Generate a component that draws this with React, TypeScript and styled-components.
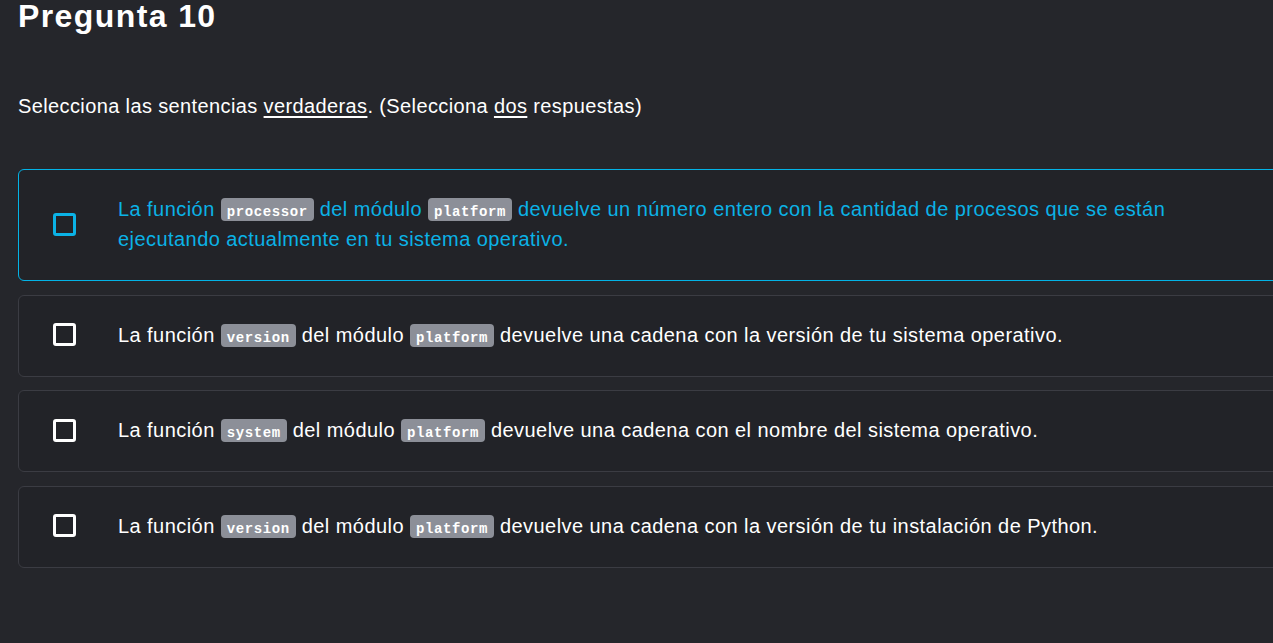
import React from "react";
import styled, { createGlobalStyle } from "styled-components";

const GlobalStyle = createGlobalStyle`
  html, body {
    margin: 0;
    padding: 0;
    background: #25262b;
    overflow: hidden;
  }
  body {
    font-family: "Liberation Sans", Arial, sans-serif;
    color: #ffffff;
  }
`;

const Page = styled.div`
  padding: 0 0 0 18px;
  width: 1300px;
  min-height: 643px;
  box-sizing: border-box;
`;

const Title = styled.h1`
  margin: 0;
  font-size: 32px;
  line-height: 32px;
  font-weight: 700;
  letter-spacing: 1.4px;
  color: #ffffff;
`;

const Prompt = styled.p`
  margin: 62px 0 0 0;
  font-size: 20px;
  line-height: 24px;
  letter-spacing: 0.38px;
`;

const U = styled.span`
  text-decoration: underline;
  text-underline-offset: 3px;
`;

const Options = styled.div`
  display: flex;
  flex-direction: column;
  gap: 13.5px;
  margin-top: 51px;
`;

const Card = styled.div<{ $selected?: boolean }>`
  display: flex;
  align-items: center;
  gap: 42px;
  padding: 24px 34px 26px 34px;
  border: 1px solid ${(p) => (p.$selected ? "#03b3e6" : "#3b3c43")};
  border-radius: 6px;
  background: #222328;
  color: ${(p) => (p.$selected ? "#0bb2e6" : "#ffffff")};
`;

const Box = styled.span<{ $selected?: boolean }>`
  flex: 0 0 auto;
  width: 23px;
  height: 23px;
  box-sizing: border-box;
  border: 3px solid ${(p) => (p.$selected ? "#0bb2e6" : "#ffffff")};
  border-radius: 3px;
`;

const Text = styled.div`
  font-size: 20px;
  line-height: 30px;
  letter-spacing: 0.44px;
  max-width: 1090px;
`;

const Code = styled.code`
  display: inline-block;
  height: 23px;
  box-sizing: border-box;
  padding: 4px 6px 0 6px;
  border-radius: 4px;
  background: #8c8f98;
  color: #ffffff;
  font-family: "Liberation Mono", "DejaVu Sans Mono", monospace;
  font-weight: 700;
  font-size: 14px;
  line-height: 20px;
  letter-spacing: 0.6px;
  vertical-align: baseline;
`;

type Opt = { fn: string; rest: string; selected?: boolean };

const options: Opt[] = [
  {
    fn: "processor",
    rest:
      "devuelve un número entero con la cantidad de procesos que se están ejecutando actualmente en tu sistema operativo.",
    selected: true,
  },
  {
    fn: "version",
    rest: "devuelve una cadena con la versión de tu sistema operativo.",
  },
  {
    fn: "system",
    rest: "devuelve una cadena con el nombre del sistema operativo.",
  },
  {
    fn: "version",
    rest: "devuelve una cadena con la versión de tu instalación de Python.",
  },
];

export default function App() {
  return (
    <>
      <GlobalStyle />
      <Page>
        <Title>Pregunta 10</Title>
        <Prompt>
          Selecciona las sentencias <U>verdaderas</U>. (Selecciona <U>dos</U> respuestas)
        </Prompt>
        <Options>
          {options.map((o, i) => (
            <Card key={i} $selected={o.selected}>
              <Box $selected={o.selected} />
              <Text>
                La función <Code>{o.fn}</Code> del módulo <Code>platform</Code> {o.rest}
              </Text>
            </Card>
          ))}
        </Options>
      </Page>
    </>
  );
}
